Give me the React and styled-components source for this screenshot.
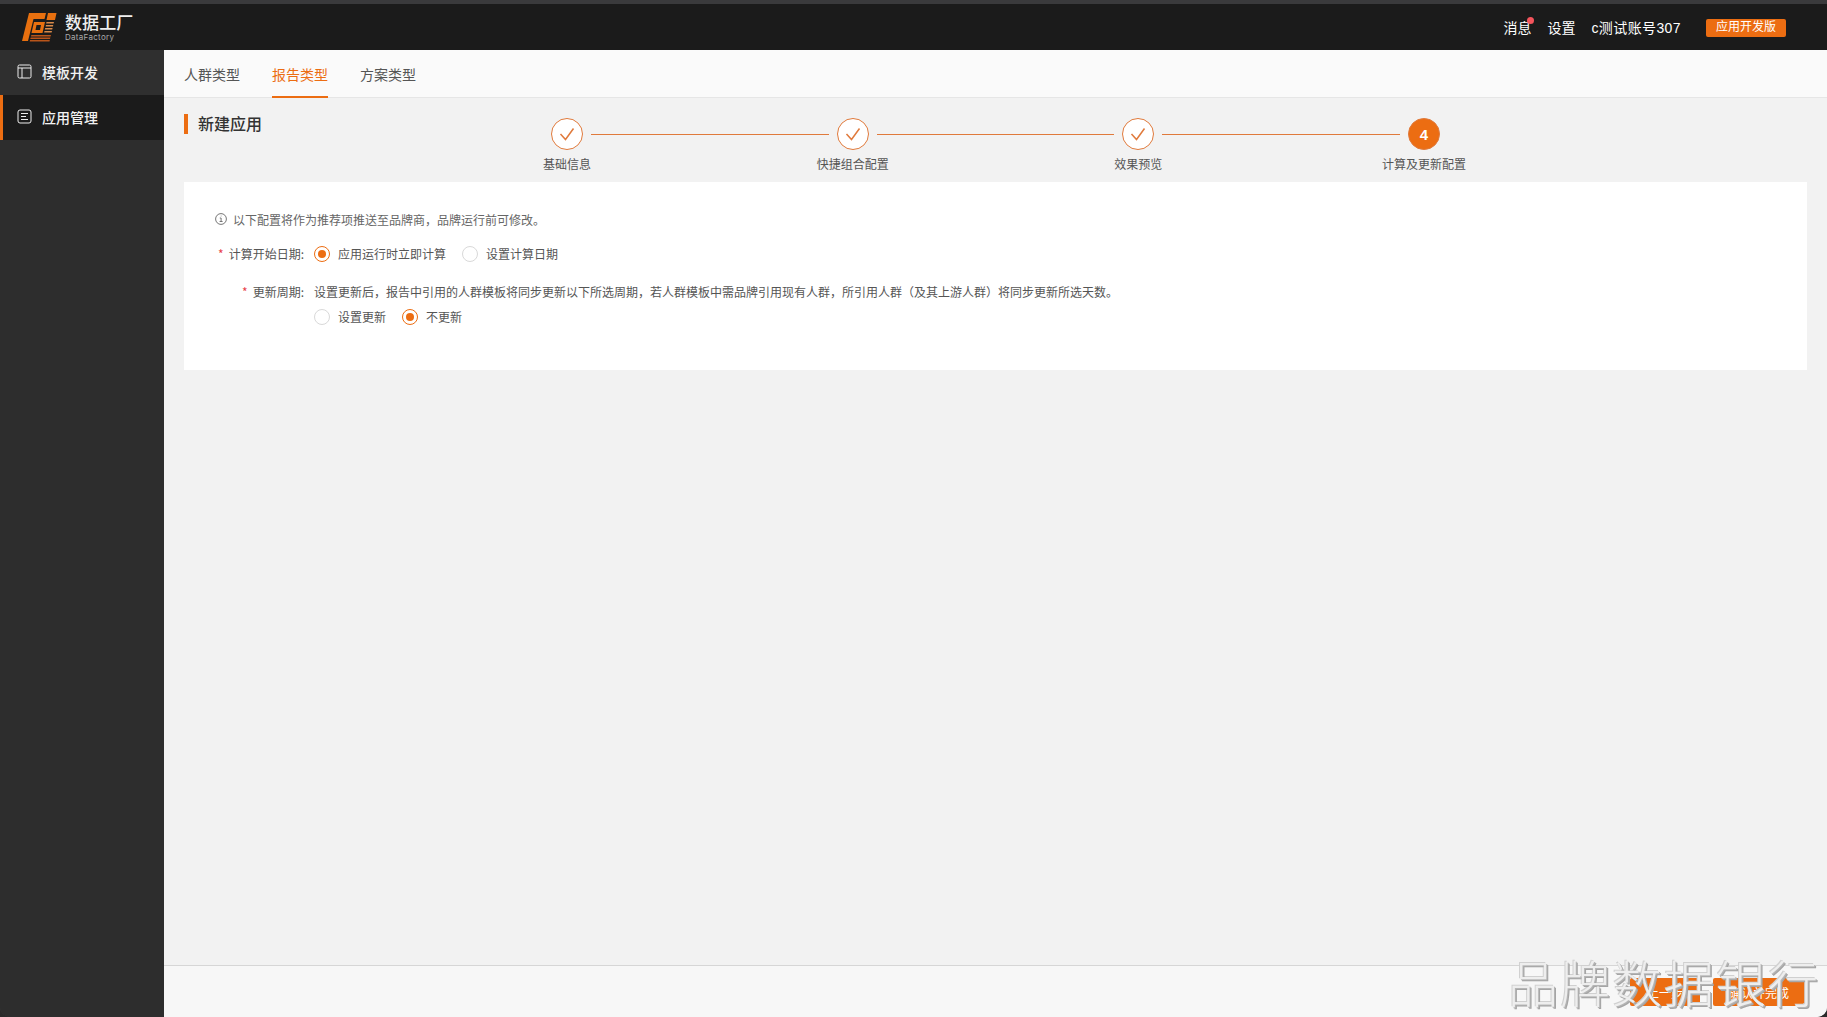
import React from "react";
import styled, { createGlobalStyle } from "styled-components";

const Global = createGlobalStyle`
  html, body { margin: 0; padding: 0; height: 100%; background: #2a2a2a; }
  * { box-sizing: border-box; }
  body { font-family: "Noto Sans CJK SC", "Liberation Sans", sans-serif; color: #333; overflow: hidden; }
`;

const ORANGE = "#ec6d12";

const Shell = styled.div`
  position: relative; width: 100%; height: 100vh; display: flex; flex-direction: column;
  background: #3a3a3c; overflow: hidden; border-radius: 0 0 10px 10px; padding-top: 4px;
`;
const TopBar = styled.header`
  height: 46px; flex: none; background: #1b1b1b; display: flex; align-items: center; padding: 0 41px 0 21px;
`;
const Brand = styled.div`display: flex; align-items: center; gap: 9px;`;
const BrandText = styled.div`display: flex; flex-direction: column; color: #fff; margin-left: -1px;`;
const BrandName = styled.span`font-size: 17px; line-height: 20px; letter-spacing: 0.1px; font-weight: 500; color: #eee;`;
const BrandSub = styled.span`font-family: "Inter", sans-serif; font-size: 8px; line-height: 10px; color: #aaa; letter-spacing: .3px;`;
const TopRight = styled.nav`
  margin-left: auto; display: flex; align-items: center; font-size: 14px; color: #fff; padding-top: 2px;
  font-family: "Liberation Sans", "Noto Sans CJK SC", sans-serif;
`;
const TopLink = styled.span`
  position: relative; margin-left: ${p => p.$gap}px; line-height: 20px; white-space: nowrap;
  letter-spacing: ${p => p.$spacing || 0}px;
`;
const Dot = styled.i`position: absolute; top: -1px; right: -3px; width: 7px; height: 7px; border-radius: 50%; background: #f4545c;`;
const EnvBadge = styled.span`
  margin-left: 25px; width: 80px; height: 18px; background: ${ORANGE}; border-radius: 2px; color: #fff;
  font-size: 12px; line-height: 17px; text-align: center;
`;
const Body = styled.div`flex: 1; display: flex; min-height: 0;`;
const Side = styled.aside`width: 164px; flex: none; background: #2d2d2d;`;
const SideItem = styled.div`
  height: 45px; display: flex; align-items: center; gap: 10px; color: #f2f2f2;
  font-size: 14px; font-weight: 500; line-height: 18px; padding-bottom: 2px;
  background: ${p => p.$active ? "#1b1b1b" : "#2f2f2f"};
  border-left: ${p => p.$active ? `3px solid ${ORANGE}` : "0"};
  padding-left: ${p => p.$active ? 14 : 17}px;
`;
const Main = styled.main`flex: 1; min-width: 0; display: flex; flex-direction: column; background: #f2f2f2;`;
const Tabs = styled.div`
  height: 48px; flex: none; background: #fafafa; border-bottom: 1px solid #e6e6e6; display: flex; gap: 32px; padding-left: 20px;
`;
const Tab = styled.div`
  height: 48px; font-size: 14px; line-height: 48px; color: ${p => p.$active ? ORANGE : "#555"};
  border-bottom: ${p => p.$active ? `2px solid ${ORANGE}` : "0"};
`;
const Content = styled.div`flex: 1; min-height: 0; padding: 20px 20px 0 20px;`;
const Head = styled.div`display: flex; height: 64px;`;
const Title = styled.h1`
  margin: 0; width: 367px; flex: none; height: 20px; margin-top: -4px; border-left: 4px solid ${ORANGE}; padding-left: 10px;
  font-size: 16px; font-weight: 500; line-height: 18px; color: #333;
`;
const Stepper = styled.div`display: flex; width: 889px; height: 32px; align-items: center;`;
const Step = styled.div`width: 32px; flex: none; display: flex; flex-direction: column; align-items: center; height: 32px;`;
const Circle = styled.div`
  width: 32px; height: 32px; flex: none; border-radius: 50%; display: flex; align-items: center; justify-content: center;
  border: 1px solid #e07a3c; background: ${p => p.$done ? "#fff" : ORANGE}; color: #fff;
  font-family: "Liberation Sans", sans-serif; font-size: 15px; font-weight: 700;
`;
const StepLabel = styled.div`margin-top: 4px; font-size: 12px; line-height: 20px; white-space: nowrap; color: #555;`;
const Line = styled.div`flex: 1; height: 1px; margin: 0 8px; background: #e07a3c;`;
const Card = styled.section`height: 188px; background: #fff; padding: 27px 0 0 0; font-size: 12px; color: #555;`;
const Info = styled.div`display: flex; align-items: center; gap: 6px; padding-left: 31px; height: 20px; color: #666;`;
const Row = styled.div`display: flex; align-items: center; height: 20px; margin-top: ${p => p.$mt}px;`;
const Label = styled.div`width: 130px; flex: none; text-align: right; padding-right: 10px; color: #555; white-space: nowrap;`;
const Star = styled.span`color: #e8414a; margin-right: 5px;`;
const RadioItem = styled.label`display: flex; align-items: center; gap: 8px; margin-right: ${p => p.$mr}px; white-space: nowrap; color: #555;`;
const RadioDot = styled.span`
  width: 16px; height: 16px; margin-top: 1px; border-radius: 50%; border: 1px solid ${p => p.$on ? ORANGE : "#d9d9d9"}; background: #fff;
  display: flex; align-items: center; justify-content: center;
  &::after { content: ""; width: 8px; height: 8px; border-radius: 50%; background: ${p => p.$on ? ORANGE : "transparent"}; }
`;
const Footer = styled.footer`
  height: 52px; flex: none; background: #f7f7f7; border-top: 1px solid #d6d6d6; display: flex; align-items: center;
  justify-content: flex-end; gap: 13px; padding: 1px 22px 0 0;
`;
const Btn = styled.button`
  height: 28px; width: ${p => p.$w}px; border: 0; border-radius: 2px; background: ${ORANGE}; color: #fff; font: inherit; font-size: 12px; padding: 0;
`;
const Watermark = styled.div`
  position: absolute; right: 7px; bottom: 6px; font-size: 50px; line-height: 60px; font-weight: 300; letter-spacing: 2px;
  color: #eeeeee; white-space: nowrap; pointer-events: none;
  text-shadow: 1px 1px 0 #b5b5b5, 2px 2px 0 #a5a5a5, -1px -1px 0 #d0d0d0;
`;

const Logo = () => (
  <svg width="36" height="30" viewBox="0 0 36 30">
    <path d="M8 1H25L23.500 7H12.500L7 29H1Z" fill="#e8700f" />
    <path d="M27 1H35.500L34 8H25.500Z" fill="#e8700f" />
    <path d="M13 10H24L21.500 21H10.500ZM15.500 13L14.500 18H19L20 13Z" fill="#e8700f" fillRule="evenodd" />
    <path d="M25.500 10H33L32.600 11.500H25.100ZM25 13H32.300L31.900 14.500H24.600ZM24.200 16H31.600L31.200 17.500H23.800ZM23.500 19H31L30.600 20.500H23.100Z" fill="#d98a4a" />
    <path d="M10.300 23H30L29.600 24.500H10ZM9.700 25.500H29.400L29 27H9.300ZM9 28H28.800L28.500 29.500H8.700Z" fill="#b9551a" />
  </svg>
);
const IconPanel = () => (
  <svg width="15" height="15" viewBox="0 0 15 15" fill="none" stroke="#eee" strokeWidth="1">
    <rect x="1" y="1" width="13" height="13" rx="1.500" /><path d="M1 4h13M5 4v10" />
  </svg>
);
const IconList = () => (
  <svg width="15" height="15" viewBox="0 0 15 15" fill="none" stroke="#eee" strokeWidth="1">
    <rect x="1" y="1" width="13" height="13" rx="2" /><path d="M4 4.500h7M4 7.500h5M4 10.500h7" />
  </svg>
);
const Check = () => (
  <svg width="16" height="14" viewBox="0 0 16 14" fill="none" stroke="#e07a3c" strokeWidth="1.500">
    <path d="M1.500 7l5 5.500L14.500 1.500" />
  </svg>
);
const InfoIcon = () => (
  <svg width="12" height="12" viewBox="0 0 12 12" fill="none" stroke="#666" strokeWidth=".9">
    <circle cx="6" cy="6" r="5.400" /><path d="M4.800 5h1.300v3.300M4.600 8.500h3M5.800 3h.6" />
  </svg>
);

const steps = ["基础信息", "快捷组合配置", "效果预览", "计算及更新配置"];

export default function App() {
  return (
    <>
      <Global />
      <Shell>
        <TopBar>
          <Brand>
            <Logo />
            <BrandText>
              <BrandName>数据工厂</BrandName>
              <BrandSub>DataFactory</BrandSub>
            </BrandText>
          </Brand>
          <TopRight>
            <TopLink>消息<Dot /></TopLink>
            <TopLink $gap={16}>设置</TopLink>
            <TopLink $gap={16} $spacing={0.4}>c测试账号307</TopLink>
            <EnvBadge>应用开发版</EnvBadge>
          </TopRight>
        </TopBar>
        <Body>
          <Side>
            <SideItem><IconPanel />模板开发</SideItem>
            <SideItem $active><IconList />应用管理</SideItem>
          </Side>
          <Main>
            <Tabs>
              <Tab>人群类型</Tab>
              <Tab $active>报告类型</Tab>
              <Tab>方案类型</Tab>
            </Tabs>
            <Content>
              <Head>
                <Title>新建应用</Title>
                <Stepper>
                  {steps.map((s, i) => (
                    <React.Fragment key={s}>
                      <Step>
                        <Circle $done={i < 3}>{i < 3 ? <Check /> : 4}</Circle>
                        <StepLabel>{s}</StepLabel>
                      </Step>
                      {i < 3 && <Line />}
                    </React.Fragment>
                  ))}
                </Stepper>
              </Head>
              <Card>
                <Info><InfoIcon />以下配置将作为推荐项推送至品牌商，品牌运行前可修改。</Info>
                <Row $mt={14}>
                  <Label><Star>*</Star>计算开始日期:</Label>
                  <RadioItem $mr={16}><RadioDot $on />应用运行时立即计算</RadioItem>
                  <RadioItem><RadioDot />设置计算日期</RadioItem>
                </Row>
                <Row $mt={18}>
                  <Label><Star>*</Star>更新周期:</Label>
                  <span>设置更新后，报告中引用的人群模板将同步更新以下所选周期，若人群模板中需品牌引用现有人群，所引用人群（及其上游人群）将同步更新所选天数。</span>
                </Row>
                <Row $mt={5}>
                  <Label />
                  <RadioItem $mr={16}><RadioDot />设置更新</RadioItem>
                  <RadioItem><RadioDot $on />不更新</RadioItem>
                </Row>
              </Card>
            </Content>
            <Footer>
              <Btn $w={70}>上一步</Btn>
              <Btn $w={92}>确认并完成</Btn>
            </Footer>
          </Main>
        </Body>
        <Watermark>品牌数据银行</Watermark>
      </Shell>
    </>
  );
}
